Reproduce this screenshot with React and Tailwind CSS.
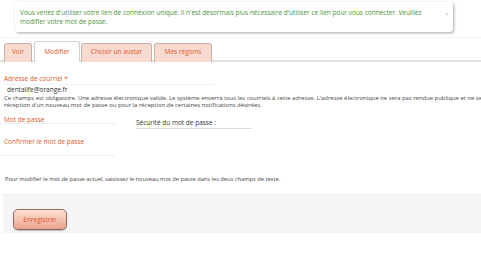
export default function App() {
  const font = { fontFamily: '"Open Sans", "Liberation Sans", sans-serif' };
  return (
    <div className="w-[481px] h-[254px] bg-white overflow-hidden relative" style={font}>
      {/* alert */}
      <div className="ml-[15px] mt-[2px] w-[438px] h-[30px] bg-white rounded-[3px] shadow-[1px_1px_3px_rgba(0,0,0,0.35)] flex items-start pl-[5px] pr-[4px] pt-[6px]">
        <p className="flex-1 text-[6.5px] leading-[9px] text-[#4f913c]">
          Vous venez d'utiliser votre lien de connexion unique. Il n'est désormais plus nécessaire d'utiliser ce lien pour vous connecter. Veuillez modifier votre mot de passe.
        </p>
        <span className="text-[7px] leading-[9px] text-[#c8c8c8] ml-[4px] mt-[2px]">×</span>
      </div>
      <div className="mt-[5px] h-px bg-[#f4f4f4]" />
      {/* tabs */}
      <div className="mt-[4px] h-[20px] flex items-end border-b-2 border-[#e2e2e2] pl-[4px] gap-[2px]">
        <div className="h-[19px] w-[28px] bg-[#f7dbd0] border border-b-0 border-[#c7b3a8] rounded-t-[3px] flex items-center justify-center text-[6.5px] text-[#e05a2b] -mb-[2px] pb-[2px]">Voir</div>
        <div className="h-[21px] w-[46px] bg-white border border-b-0 border-[#d0d0d0] rounded-t-[3px] flex items-center justify-center text-[6.5px] text-[#e05a2b] -mb-[2px] pb-[1px]">Modifier</div>
        <div className="h-[19px] w-[71px] bg-[#f7dbd0] border border-b-0 border-[#c7b3a8] rounded-t-[3px] flex items-center justify-center text-[6.5px] text-[#e05a2b] -mb-[2px] pb-[2px] -ml-[1px]">Choisir un avatar</div>
        <div className="h-[19px] w-[58px] bg-[#f7dbd0] border border-b-0 border-[#c7b3a8] rounded-t-[3px] flex items-center justify-center text-[6.5px] text-[#e05a2b] -mb-[2px] pb-[2px]">Mes régions</div>
      </div>
      {/* form */}
      <div className="pt-[12px]">
        <div className="pl-[4px] text-[6.5px] leading-[9px] text-[#e05a2b]">Adresse de courriel *</div>
        <div className="mt-[1px] w-[215px] border-t border-[#f2f2f2] pl-[7px] pt-[1px] text-[6.5px] leading-[8px] text-[#333]">dentalife@orange.fr</div>
        <div className="mt-[1px] pl-[4px] text-[5.9px] leading-[7px] text-[#444] whitespace-nowrap">
          <div>Ce champs est obligatoire. Une adresse électronique valide. Le système enverra tous les courriels à cette adresse. L'adresse électronique ne sera pas rendue publique et ne sera utilisée que pour la</div>
          <div>réception d'un nouveau mot de passe ou pour la réception de certaines notifications désirées.</div>
        </div>
        <div className="mt-[6px] flex items-start">
          <div className="w-[136px]">
            <div className="pl-[4px] h-[8px] overflow-hidden text-[6.5px] leading-[9px] text-[#e05a2b]">Mot de passe</div>
            <div className="w-[115px] h-px bg-[#eeeeee]" />
          </div>
          <div className="pt-[4px]">
            <div className="text-[6.5px] leading-[8px] text-[#333]">Sécurité du mot de passe :</div>
            <div className="mt-[1px] w-[116px] h-px bg-[#dcdcdc]" />
          </div>
        </div>
        <div className="mt-[8px] pl-[4px] text-[6.5px] leading-[9px] text-[#e05a2b]">Confirmer le mot de passe</div>
        <div className="mt-[9px] w-[115px] h-px bg-[#f0f0f0]" />
        <div className="mt-[20px] pl-[5px] text-[5.7px] leading-[7px] text-[#444]">Pour modifier le mot de passe actuel, saisissez le nouveau mot de passe dans les deux champs de texte.</div>
      </div>
      {/* actions */}
      <div className="mt-[11px] ml-[3px] h-[39px] bg-[#f5f5f5] border-t border-[#ececec] pl-[10px] pt-[9px]">
        <button className="w-[54px] h-[21px] rounded-[5px] border border-[#8a6a5e] bg-gradient-to-b from-[#fbe0d4] to-[#eaa48c] text-[6.5px] text-[#e0552a] shadow-[0_1px_1px_rgba(0,0,0,0.25)]" style={font}>
          Enregistrer
        </button>
      </div>
    </div>
  );
}
